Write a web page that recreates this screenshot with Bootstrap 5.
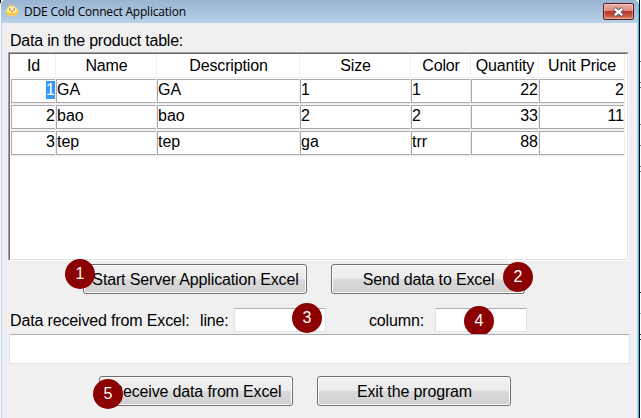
<!DOCTYPE html>
<html lang="en">
<head>
<meta charset="utf-8">
<title>DDE Cold Connect Application</title>
<link href="https://cdn.jsdelivr.net/npm/bootstrap@5.3.0/dist/css/bootstrap.min.css" rel="stylesheet">
<style>
html,body{height:418px;overflow:hidden}
body{font:16px/20px "Liberation Sans",Arial,sans-serif;letter-spacing:-.15px;color:#000;background:#000}
.shell{width:641px;height:418px;background:linear-gradient(90deg,#000 0 1px,#fff 1px)}
.win{width:639px;height:418px;background:#f0f0f0;border-left:1px solid #fafcfe;border-right:1px solid #35c3ee;border-top-left-radius:5px;border-top-right-radius:5px;overflow:hidden;box-shadow:inset 1px 0 #b9d1ea,inset -1px 0 #b9d1ea}
.edge{width:2px;background:linear-gradient(90deg,#000 1px,transparent 1px),linear-gradient(#fff 61px,#876 61px 62px,#fff 62px 82px,#876 82px 83px,#fff 83px 87px,#876 87px 88px,#fff 88px 124px,#876 124px 125px,#fff 125px 145px,#876 145px 146px,#fff 146px 166px,#876 166px 167px,#fff 167px 171px,#876 171px 172px,#fff 172px 292px,#333 292px 293px,#fff 293px 313px,#9bd 313px 314px,#fff 314px 334px,#333 334px 335px,#fff 335px 339px,#333 339px 340px,#fff 340px)}
.titlebar{height:23px;background:linear-gradient(#99b4d1,#b9d1ea);font:12px/16px "Open Sans","Noto Sans",sans-serif;padding:0 4px 0 4px}
.ttl{letter-spacing:-.2px;margin-left:5px;white-space:nowrap}
.closebtn{width:31px;height:17px;margin-top:3px;border:1px solid #5b1a1a;border-radius:2px;padding:0;background:linear-gradient(#e9b0a6 0,#dc8d80 45%,#b93a24 50%,#c4503a 75%,#dc8c75);box-shadow:inset 0 0 0 1px #ffffff55}
.gap-label{height:29px;padding:8px 0 0 9px;letter-spacing:-.22px}
.sheet{width:621px;height:209px;margin-left:7px;background:#fff;border:1px solid;border-color:#a0a0a0 #fff #fff #a0a0a0}
.sheet-in{height:100%;border:1px solid;border-color:#696969 #e3e3e3 #e3e3e3 #696969;padding-left:1px}
.gridrow{display:grid;grid-template-columns:45px 101px 143px 111px 60px 68px 86px}
.hd{height:24px;line-height:23px;text-align:center;border-right:1px solid #eee;border-bottom:1px solid #eee;padding-left:1px}
.gridrow.top{padding-bottom:1px}
.cellbox{height:24px;border:1px solid #a8a8ad;border-right:0;line-height:20px;background:#fff;white-space:nowrap;letter-spacing:0}
.cellwrap{height:26px;border-right:1px solid #eee;border-bottom:1px solid #f6f6f6;background:linear-gradient(#fff 24px,#eee 24px)}
.num{text-align:right}
.sel{display:inline-block;height:18px;line-height:18px;background:#3399ff;color:#fff;vertical-align:top;margin-top:1px}
.winbtn{position:relative;height:30px;border:1px solid #707070;border-radius:3px;padding:1px 0 0 1px;font-size:16px;line-height:27px;letter-spacing:-.15px;color:#000;background:linear-gradient(#f2f2f2 0,#ebebeb 48%,#dadada 50%,#cfcfcf);box-shadow:inset 0 0 0 1px #fcfcfc;white-space:nowrap}
.w224{width:224px}.w194{width:194px}
.row-a{height:30px;margin-top:3px;padding-left:82px;gap:24px}
.row-b{height:24px;margin-top:14px;padding-left:9px}
.row-b label{padding-top:2px}
.lb1{width:190px}.lb2{width:34px}.lb3{width:66px;margin-left:43px}
.fld{position:relative;height:24px;border:1px solid #e2e3ea;border-top-color:#abadb3;border-radius:1px;background:#fff}
.w92{width:92px}
.wide{width:621px;height:30px;margin:2px 0 0 8px}
.row-c{height:30px;margin-top:12px;padding-left:98px;gap:24px}
.dot{position:absolute;width:30px;height:30px;border-radius:50%;background:#8b0000;color:#fff;text-align:center;line-height:29px;font-size:16px;letter-spacing:0}
.dot-1{left:-19px;top:-6px}.dot-2{left:171px;top:-3px}.dot-3{left:57px;top:-6px}.dot-4{left:28px;top:-3px}.dot-5{left:-7px;top:2px}
</style>
</head>
<body>
<div class="shell d-flex">
<main class="win flex-shrink-0">
 <header class="titlebar d-flex justify-content-between">
  <div class="d-flex pt-1">
   <svg width="14" height="13" viewBox="0 0 13 13"><path d="M3 4 4 .5l2 1L8 .5l1.500 3.500z" fill="#ffe27c"/><circle cx="6.500" cy="1.500" r="1.300" fill="#f4a97c"/><ellipse cx="6.500" cy="7.500" rx="6.400" ry="4.500" fill="#ffd24a"/><ellipse cx="6.500" cy="6" rx="5" ry="3.300" fill="#fff0b0"/><path d="M4.300 4v2.500M8.700 4v2.500" stroke="#a06a50" stroke-width="1"/><path d="M5 6.500h3L6.500 9z" fill="#f28030"/><path d="M2 10q4.500 2 9 0" stroke="#f9b82c" fill="none"/></svg>
   <span class="ttl">DDE Cold Connect Application</span>
  </div>
  <button class="closebtn d-flex align-items-center justify-content-center" aria-label="Close"><svg width="13" height="10" viewBox="0 0 13 10"><path d="m2.500 1.500 8 7m0-7-8 7" stroke="#535666" stroke-width="4"/><path d="m2.800 1.800 7.400 6.400m0-6.400-7.400 6.400" stroke="#fff" stroke-width="2.400"/></svg></button>
 </header>
 <div class="gap-label">Data in the product table:</div>
 <section class="sheet"><div class="sheet-in">
  <div class="gridrow top"><div class="hd">Id</div><div class="hd">Name</div><div class="hd">Description</div><div class="hd">Size</div><div class="hd">Color</div><div class="hd">Quantity</div><div class="hd">Unit Price</div></div>
  <div class="gridrow"><div class="cellwrap"><div class="cellbox num"><span class="sel">1</span></div></div><div class="cellwrap"><div class="cellbox">GA</div></div><div class="cellwrap"><div class="cellbox">GA</div></div><div class="cellwrap"><div class="cellbox">1</div></div><div class="cellwrap"><div class="cellbox">1</div></div><div class="cellwrap"><div class="cellbox num">22</div></div><div class="cellwrap"><div class="cellbox num">2</div></div></div>
  <div class="gridrow"><div class="cellwrap"><div class="cellbox num">2</div></div><div class="cellwrap"><div class="cellbox">bao</div></div><div class="cellwrap"><div class="cellbox">bao</div></div><div class="cellwrap"><div class="cellbox">2</div></div><div class="cellwrap"><div class="cellbox">2</div></div><div class="cellwrap"><div class="cellbox num">33</div></div><div class="cellwrap"><div class="cellbox num">11</div></div></div>
  <div class="gridrow"><div class="cellwrap"><div class="cellbox num">3</div></div><div class="cellwrap"><div class="cellbox">tep</div></div><div class="cellwrap"><div class="cellbox">tep</div></div><div class="cellwrap"><div class="cellbox">ga</div></div><div class="cellwrap"><div class="cellbox">trr</div></div><div class="cellwrap"><div class="cellbox num">88</div></div><div class="cellwrap"><div class="cellbox num"></div></div></div>
 </div></section>
 <div class="row-a d-flex">
  <button class="winbtn w224">Start Server Application Excel<span class="dot dot-1">1</span></button>
  <button class="winbtn w194">Send data to Excel<span class="dot dot-2">2</span></button>
 </div>
 <div class="row-b d-flex align-items-center">
  <label class="lb1">Data received from Excel:</label><label class="lb2">line:</label>
  <div class="fld w92"><span class="dot dot-3">3</span></div>
  <label class="lb3">column:</label>
  <div class="fld w92"><span class="dot dot-4">4</span></div>
 </div>
 <div class="fld wide"></div>
 <div class="row-c d-flex">
  <button class="winbtn w194">Receive data from Excel<span class="dot dot-5">5</span></button>
  <button class="winbtn w194">Exit the program</button>
 </div>
</main>
<div class="edge"></div>
</div>
<script src="https://cdn.jsdelivr.net/npm/bootstrap@5.3.0/dist/js/bootstrap.bundle.min.js"></script>
</body>
</html>
